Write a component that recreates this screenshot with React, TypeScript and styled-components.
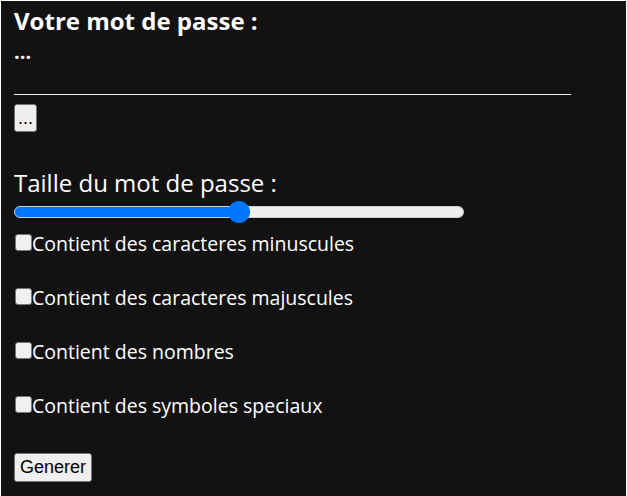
import React, { useState } from "react";
import styled, { createGlobalStyle } from "styled-components";

const Global = createGlobalStyle`
  html, body { margin: 0; padding: 0; background: #ffffff; }
  #root { min-height: 100vh; }
`;

const Page = styled.div`
  margin: 1px 1px 0 1px;
  min-height: calc(100vh - 1px);
  background: #121212;
  color: #ffffff;
  font-family: "Open Sans", "Noto Sans", sans-serif;
  padding: 4px 13px 0 13px;
  box-sizing: border-box;
`;

const Title = styled.h1`
  margin: 0;
  font-size: 24px;
  font-weight: 700;
  line-height: 32px;
`;

const Password = styled.div`
  font-size: 20px;
  font-weight: 700;
  line-height: 26px;
  padding-top: 2px;
  width: 557px;
  height: 58px;
  border-bottom: 1px solid #f0f0f0;
  box-sizing: border-box;
`;

const NativeButton = styled.button<{ $pad: number; $h: number }>`
  display: block;
  font-family: "Liberation Sans", Arial, sans-serif;
  font-size: 18px;
  color: #000000;
  background: #efefef;
  border: 1px solid #767676;
  border-radius: 3px;
  padding: 0 ${(p) => p.$pad}px;
  height: ${(p) => p.$h}px;
  line-height: 21px;
  margin: 0;
  cursor: pointer;
`;

const CopyRow = styled.div`
  margin-top: 9px;
`;

const SizeLabel = styled.div`
  margin-top: 35px;
  font-size: 24px;
  line-height: 32px;
`;

const Slider = styled.input<{ $pct: number }>`
  -webkit-appearance: none;
  appearance: none;
  display: block;
  width: 450px;
  height: 12px;
  margin: 7px 0 0 0;
  border-radius: 6px;
  border: 1px solid #cfcfcf;
  box-sizing: border-box;
  background: linear-gradient(
    to right,
    #0075ff 0%,
    #0075ff ${(p) => p.$pct}%,
    #efefef ${(p) => p.$pct}%,
    #efefef 100%
  );
  outline: none;
  &::-webkit-slider-thumb {
    -webkit-appearance: none;
    appearance: none;
    width: 22px;
    height: 22px;
    border-radius: 50%;
    background: #0075ff;
    border: none;
  }
`;

const Options = styled.div`
  display: flex;
  flex-direction: column;
  gap: 27px;
  margin-top: 12px;
`;

const Option = styled.label`
  display: flex;
  align-items: flex-start;
  font-size: 19.5px;
  line-height: 27px;
`;

const Check = styled.input`
  -webkit-appearance: none;
  appearance: none;
  width: 17px;
  height: 17px;
  margin: 4px 0 0 1px;
  background: #f0f0f0;
  border: 1px solid #767676;
  border-radius: 3px;
  box-sizing: border-box;
  flex: none;
`;

const GenerateRow = styled.div`
  margin-top: 34px;
`;

const options = [
  "Contient des caracteres minuscules",
  "Contient des caracteres majuscules",
  "Contient des nombres",
  "Contient des symboles speciaux",
];

export default function App() {
  const [size, setSize] = useState(50);
  return (
    <>
      <Global />
      <Page>
        <Title>Votre mot de passe :</Title>
        <Password>...</Password>
        <CopyRow>
          <NativeButton $pad={3} $h={28}>...</NativeButton>
        </CopyRow>
        <SizeLabel>Taille du mot de passe :</SizeLabel>
        <Slider
          type="range"
          min={0}
          max={100}
          value={size}
          $pct={size}
          onChange={(e) => setSize(Number(e.target.value))}
        />
        <Options>
          {options.map((o) => (
            <Option key={o}>
              <Check type="checkbox" />
              {o}
            </Option>
          ))}
        </Options>
        <GenerateRow>
          <NativeButton $pad={5} $h={29}>Generer</NativeButton>
        </GenerateRow>
      </Page>
    </>
  );
}
